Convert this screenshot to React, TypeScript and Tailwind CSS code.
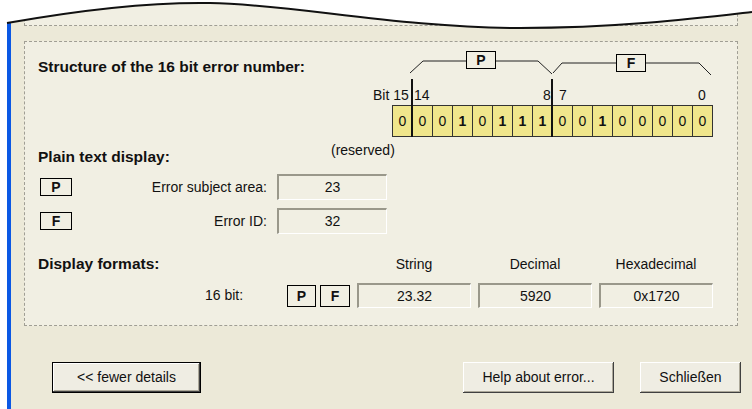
import type { ReactNode } from 'react'

const bits = [0, 0, 0, 1, 0, 1, 1, 1, 0, 0, 1, 0, 0, 0, 0, 0]

function Tag({ children, className = '' }: { children: ReactNode; className?: string }) {
  return (
    <div className={`flex items-center justify-center border border-black font-bold text-[14px] leading-none ${className}`}>
      {children}
    </div>
  )
}

function Field({ value, className = '' }: { value: string; className?: string }) {
  return (
    <div
      className={`flex items-center justify-center border-t-2 border-l-2 border-b border-r border-t-[#9a988b] border-l-[#9a988b] border-b-white border-r-white text-[14px] ${className}`}
    >
      {value}
    </div>
  )
}

function Btn({ children, main = false, className = '' }: { children: ReactNode; main?: boolean; className?: string }) {
  return (
    <button
      className={`h-[31px] bg-[#efede3] text-[14px] shadow-[inset_-1px_-1px_0_#404040,inset_1px_1px_0_#ffffff,inset_-2px_-2px_0_#aca899] ${
        main ? 'border border-black' : ''
      } ${className}`}
    >
      {children}
    </button>
  )
}

export default function App() {
  return (
    <div className="relative w-[752px] h-[409px] overflow-hidden bg-white font-['Liberation_Sans',Arial,sans-serif] text-[#111]">
      <div className="ml-[7px] h-full border-l-4 border-[#0b58e4] bg-[#ece9d8] pl-[13px] pr-[14px] flex flex-col">
        {/* bottom of previous group */}
        <div className="h-[26px] border-x border-b border-dashed border-[#a09e94] bg-[#f1efe3]" />

        {/* error number group */}
        <div className="mt-[15px] h-[285px] border border-dashed border-[#a09e94] bg-[#f1efe3] flex flex-col">
          {/* structure */}
          <div className="h-[100px] flex justify-between">
            <div className="ml-[13px] mt-[16px] text-[15.5px] leading-[18px] font-bold">Structure of the 16 bit error number:</div>
            <div className="relative w-[360px] h-[92px] mt-[6px] mr-[17px]">
              <svg className="absolute inset-0" width="360" height="92" viewBox="0 0 360 92">
                <polyline points="50,25 63,13 106,13" fill="none" stroke="#222" strokeWidth="1" />
                <polyline points="136,13 178,13 192,26" fill="none" stroke="#222" strokeWidth="1" />
                <polyline points="193,25 202,15 256,15" fill="none" stroke="#222" strokeWidth="1" />
                <polyline points="286,15 339,15 351,27" fill="none" stroke="#222" strokeWidth="1" />
              </svg>
              <Tag className="absolute left-[106px] top-[3px] w-[30px] h-[18px] bg-[#f1efe3]">P</Tag>
              <Tag className="absolute left-[256px] top-[6px] w-[30px] h-[18px] bg-[#f1efe3]">F</Tag>
              <span className="absolute left-[13px] top-[39px] text-[14px] leading-[16px]">Bit 15</span>
              <span className="absolute left-[54px] top-[39px] text-[14px] leading-[16px]">14</span>
              <span className="absolute left-[183px] top-[39px] text-[14px] leading-[16px]">8</span>
              <span className="absolute left-[199px] top-[39px] text-[14px] leading-[16px]">7</span>
              <span className="absolute left-[338px] top-[39px] text-[14px] leading-[16px]">0</span>
              <div className="absolute left-[32px] top-[57px] flex border-l border-[#333]">
                {bits.map((b, i) => (
                  <div
                    key={i}
                    className={`w-[20px] h-[32px] flex items-center justify-center border-y border-r border-[#333] bg-[#f0e68c] text-[14px] ${
                      b ? 'font-bold' : ''
                    }`}
                  >
                    {b}
                  </div>
                ))}
              </div>
              <svg className="absolute inset-0" width="360" height="92" viewBox="0 0 360 92">
                <rect x="51" y="31" width="2" height="58" fill="#111" />
                <rect x="191" y="31" width="2" height="58" fill="#111" />
              </svg>
            </div>
          </div>

          {/* plain text */}
          <div className="flex items-start h-[24px]">
            <div className="w-[306px] pl-[13px] mt-[6px] text-[15.5px] leading-[18px] font-bold">Plain text display:</div>
            <div className="text-[14px] leading-[16px]">(reserved)</div>
          </div>
          <div className="mt-[8px] flex items-center">
            <Tag className="ml-[15px] w-[32px] h-[18px]">P</Tag>
            <div className="w-[195px] text-right text-[14px]">Error subject area:</div>
            <Field value="23" className="ml-[10px] w-[110px] h-[26px]" />
          </div>
          <div className="mt-[8px] flex items-center">
            <Tag className="ml-[15px] w-[32px] h-[18px]">F</Tag>
            <div className="w-[195px] text-right text-[14px]">Error ID:</div>
            <Field value="32" className="ml-[10px] w-[110px] h-[26px]" />
          </div>

          {/* display formats */}
          <div className="mt-[21px] flex items-center h-[18px]">
            <div className="w-[332px] pl-[13px] text-[15.5px] leading-[18px] font-bold">Display formats:</div>
            <div className="flex gap-[7px] text-[14px]">
              <div className="w-[114px] text-center">String</div>
              <div className="w-[114px] text-center">Decimal</div>
              <div className="w-[114px] text-center">Hexadecimal</div>
            </div>
          </div>
          <div className="mt-[10px] flex items-center">
            <div className="w-[332px] flex items-center">
              <span className="ml-[180px] w-[82px] text-[14px]">16 bit:</span>
              <Tag className="w-[29px] h-[22px]">P</Tag>
              <Tag className="ml-[4px] w-[30px] h-[22px]">F</Tag>
            </div>
            <div className="flex gap-[7px]">
              <Field value="23.32" className="w-[114px] h-[25px]" />
              <Field value="5920" className="w-[114px] h-[25px]" />
              <Field value="0x1720" className="w-[114px] h-[25px]" />
            </div>
          </div>
        </div>

        {/* buttons */}
        <div className="mt-[36px] flex items-center">
          <Btn main className="ml-[28px] w-[149px]">&lt;&lt; fewer details</Btn>
          <Btn className="ml-auto w-[151px]">Help about error...</Btn>
          <Btn className="ml-[26px] mr-[-3px] w-[101px]">Schließen</Btn>
        </div>
      </div>

      {/* torn top edge */}
      <svg className="absolute left-0 top-0" width="752" height="40" viewBox="0 0 752 40">
        <path d="M0 0 H752 V12 C700 18 620 28 520 28 C400 28 290 4 210 3 C150 2 80 10 7 23 L0 25 Z" fill="#ffffff" />
        <path d="M7 23 C80 10 150 2 210 3 C290 4 400 28 520 28 C620 28 700 18 752 12" fill="none" stroke="#111" strokeWidth="2" />
      </svg>
    </div>
  )
}
